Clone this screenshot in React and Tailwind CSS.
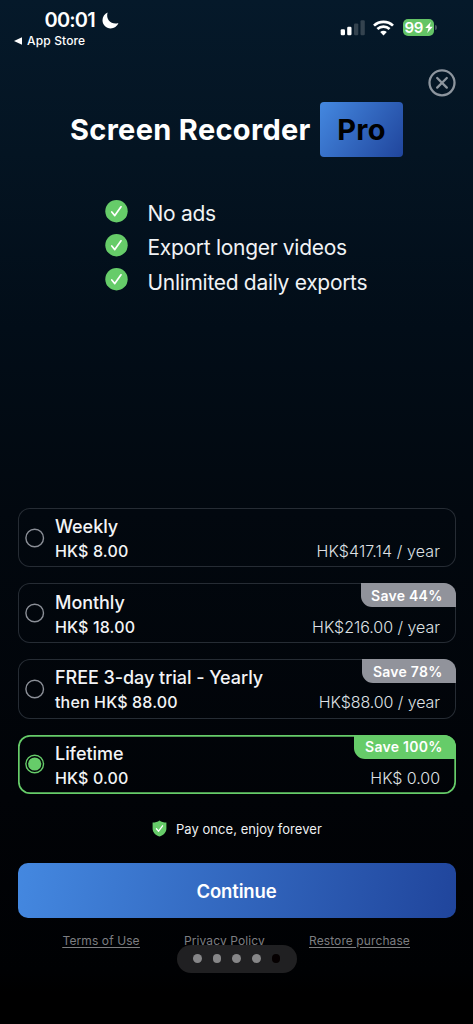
import React from "react";

const features = ["No ads", "Export longer videos", "Unlimited daily exports"];

const plans = [
  { name: "Weekly", price: "HK$ 8.00", total: "HK$417.14 / year", totalTracking: "tracking-[0.1px]" },
  { name: "Monthly", price: "HK$ 18.00", total: "HK$216.00 / year", totalTracking: "tracking-[-0.03px]", save: "Save 44%", badge: "w-[95px]" },
  { name: "FREE 3-day trial - Yearly", price: "then HK$ 88.00", total: "HK$88.00 / year", totalTracking: "tracking-[-0.08px]", save: "Save 78%", badge: "w-[94px]" },
  { name: "Lifetime", price: "HK$ 0.00", total: "HK$ 0.00", totalTracking: "tracking-[-0.05px]", save: "Save 100%", badge: "w-[102px]", selected: true },
];

function StatusBar() {
  return (
    <header className="flex h-[60px] justify-between">
      <div className="pt-[8px]">
        <div className="flex h-[24px] items-center pl-[44.5px]">
          <span className="w-[53px] text-[20px] font-semibold leading-[24px] tracking-[-0.8px]">00:01</span>
          <svg className="ml-[4.5px] h-[17px] w-[17px]" viewBox="0 0 17 17" fill="#fff">
            <path d="M5.6 0.5C2.6 1.8 0.5 4.8 0.5 8.3C0.5 12.9 4.1 16.4 8.6 16.4C12.2 16.4 15.2 14.2 16.4 11C10.4 13.2 3.3 8.3 5.6 0.5Z" />
          </svg>
        </div>
        <div className="flex h-[18px] items-center pl-[14px]">
          <svg className="h-[8px] w-[8px]" viewBox="0 0 8 8" fill="#fff"><path d="M0 4L8 0.2V7.8Z" /></svg>
          <span className="ml-[5px] whitespace-nowrap text-[12px] font-medium leading-[18px] tracking-[0.15px]">App Store</span>
        </div>
      </div>
      <div className="mt-[19px] flex h-[18px] w-[133px] items-start">
        <svg className="mt-[1px] h-[16px] w-[25px]" viewBox="0 0 25 16">
          <rect x="0.7" y="9.3" width="4.3" height="6" rx="1.2" fill="#fff" />
          <rect x="7.2" y="6.8" width="4.3" height="8.5" rx="1.2" fill="#fff" />
          <rect x="14" y="3.4" width="4.3" height="11.9" rx="1.2" fill="#34434f" />
          <rect x="20.5" y="0.3" width="4.3" height="15" rx="1.2" fill="#34434f" />
        </svg>
        <svg className="ml-[8px] mt-[1px] h-[16px] w-[21px]" viewBox="0 0 21 16" fill="none" stroke="#fff" strokeWidth="2.7">
          <path d="M1 5.6C6.2 0.5 14.8 0.5 20 5.6" />
          <path d="M4.4 9.1C7.9 5.8 13.1 5.8 16.6 9.1" />
          <path d="M10.5 15.4L7.2 12.1C9 10.4 12 10.4 13.8 12.1Z" fill="#fff" stroke="none" />
        </svg>
        <div className="ml-[8.5px] flex h-[17px] w-[31.5px] items-center rounded-[5px] bg-[#64c466] pl-[2px]">
          <span className="w-[19px] text-[15px] font-semibold leading-[17px] tracking-[-0.4px]">99</span>
          <svg className="ml-[1px] h-[11px] w-[8px]" viewBox="0 0 8 11" fill="#fff"><path d="M5.8 0L0.2 6.1H3.5L2.2 11L7.8 4.7H4.6Z" /></svg>
        </div>
        <span className="ml-[1px] mt-[6px] h-[5px] w-[1.5px] rounded-r-full bg-[#47545e]" />
      </div>
    </header>
  );
}

function Feature({ label }) {
  return (
    <li className="flex h-[34.3px] items-center">
      <svg className="-mt-[4px] h-[23px] w-[23px]" viewBox="0 0 23 23">
        <circle cx="11.5" cy="11.2" r="11.2" fill="#66cc69" />
        <path d="M6.8 12L9.8 15.6L16 6.8" fill="none" stroke="#fff" strokeWidth="1.7" strokeLinecap="round" strokeLinejoin="round" />
      </svg>
      <span className="ml-[19.5px] whitespace-nowrap pt-[1.5px] text-[21px] leading-[34px] tracking-[-0.3px] text-[#f1f3f5]">{label}</span>
    </li>
  );
}

function Plan({ name, price, total, totalTracking, save, badge, selected }) {
  return (
    <div
      className={
        "relative flex h-[59.6px] items-center rounded-[12px] pl-[7.5px] pr-[15.5px] " +
        (selected ? "shadow-[inset_0_0_0_1.7px_#66cc69]" : "shadow-[inset_0_0_0_1px_#262c34]")
      }
    >
      <svg className="h-[20px] w-[20px] shrink-0" viewBox="0 0 20 20">
        <circle cx="9.7" cy="10" r="8.8" fill="none" stroke={selected ? "#66cc69" : "#8b8f97"} strokeWidth="1.4" />
        {selected && <circle cx="9.7" cy="10" r="6.6" fill="#66cc69" />}
      </svg>
      <div className="ml-[10px] flex-1 pt-[2px]">
        <div className="whitespace-nowrap pt-px text-[18px] font-medium leading-[25px] tracking-[-0.05px] text-[#f3f4f6]">{name}</div>
        <div className="flex justify-between whitespace-nowrap text-[16px] leading-[25px]">
          <span className="font-medium tracking-[0.15px] text-[#f3f4f6]">{price}</span>
          <span className={"font-light text-[#dfe1e5] " + totalTracking}>{total}</span>
        </div>
      </div>
      {save && (
        <div
          className={
            "absolute right-0 top-0 flex h-[24px] items-center justify-end whitespace-nowrap rounded-bl-[11px] rounded-tr-[12px] pr-[13px] pt-[1.5px] text-[14px] font-semibold leading-[24px] tracking-[0.25px] " +
            badge + (selected ? " bg-[#66cc69]" : " bg-[#91939b]")
          }
        >
          {save}
        </div>
      )}
    </div>
  );
}

export default function App() {
  return (
    <div className="flex h-[1024px] w-[473px] flex-col overflow-hidden bg-[linear-gradient(180deg,#05192a_0%,#041422_15%,#020d18_32%,#02080f_50%,#010307_78%,#000103_95%,#000_97%)] font-['Inter','Liberation_Sans',sans-serif] text-white">
      <StatusBar />
      <div className="flex h-[41.5px] justify-end pr-[17px] pt-[8.5px]">
        <svg className="h-[28px] w-[28px]" viewBox="0 0 28 28" fill="none" stroke="#8d959e" strokeWidth="2.3" strokeLinecap="round">
          <circle cx="14" cy="13.8" r="12.5" />
          <path d="M9.2 9L18.8 18.6M18.8 9L9.2 18.6" />
        </svg>
      </div>
      <div className="flex h-[55.5px] items-center pl-[70px]">
        <h1 className="w-[250px] whitespace-nowrap text-[29px] font-bold leading-[55px] tracking-[0.32px]">Screen Recorder</h1>
        <div className="flex h-full w-[83px] items-center justify-center rounded-[4px] bg-[linear-gradient(125deg,#4488e0,#20459c)] text-[29px] font-bold leading-[55px] tracking-[0.2px] text-black">Pro</div>
      </div>
      <ul className="mt-[39px] pl-[105px]">
        {features.map((f) => <Feature key={f} label={f} />)}
      </ul>
      <section className="mt-[209px] flex flex-col gap-[16px] px-[17.5px]">
        {plans.map((p) => <Plan key={p.name} {...p} />)}
      </section>
      <div className="mt-[24.5px] flex h-[20px] items-center pl-[152px]">
        <svg className="h-[17px] w-[15px]" viewBox="0 0 15 17">
          <path d="M7.5 0.4C9.3 1.8 11.8 2.4 14.4 2.4V8.5C14.4 12.3 11.6 15.2 7.5 16.6C3.4 15.2 0.6 12.3 0.6 8.5V2.4C3.2 2.4 5.7 1.8 7.5 0.4Z" fill="#66cc69" />
          <path d="M4.4 8.8L6.6 11.2L10.6 5.8" fill="none" stroke="#fff" strokeWidth="1.3" strokeLinecap="round" strokeLinejoin="round" />
        </svg>
        <span className="ml-[9px] whitespace-nowrap pt-px text-[13px] leading-[20px] tracking-[0.04px] text-[#eef0f2]">Pay once, enjoy forever</span>
      </div>
      <button className="mx-[17.5px] mt-[24px] flex h-[55.5px] shrink-0 items-center justify-center rounded-[10px] bg-[linear-gradient(100deg,#4488e0,#20459c)] pt-[1.5px] text-[18.5px] font-semibold leading-[54px] tracking-[-0.15px]">Continue</button>
      <footer className="relative mt-[12px] h-[60px]">
        <div className="flex pl-[62.5px] pt-[0.5px] text-[12px] leading-[20px] tracking-[0.1px] text-[#7d7e81] underline underline-offset-2">
          <a className="w-[121.5px] whitespace-nowrap">Terms of Use</a>
          <a className="w-[125px] whitespace-nowrap">Privacy Policy</a>
          <a className="whitespace-nowrap">Restore purchase</a>
        </div>
        <div className="absolute left-[177px] top-[14.5px] flex h-[28px] w-[119.5px] items-center justify-between rounded-full bg-[#202022] px-[16.2px]">
          <i className="size-[8.6px] rounded-full bg-[#868688]" />
          <i className="size-[8.6px] rounded-full bg-[#868688]" />
          <i className="size-[8.6px] rounded-full bg-[#868688]" />
          <i className="size-[8.6px] rounded-full bg-[#868688]" />
          <i className="size-[8.6px] rounded-full bg-[#050001]" />
        </div>
      </footer>
    </div>
  );
}
